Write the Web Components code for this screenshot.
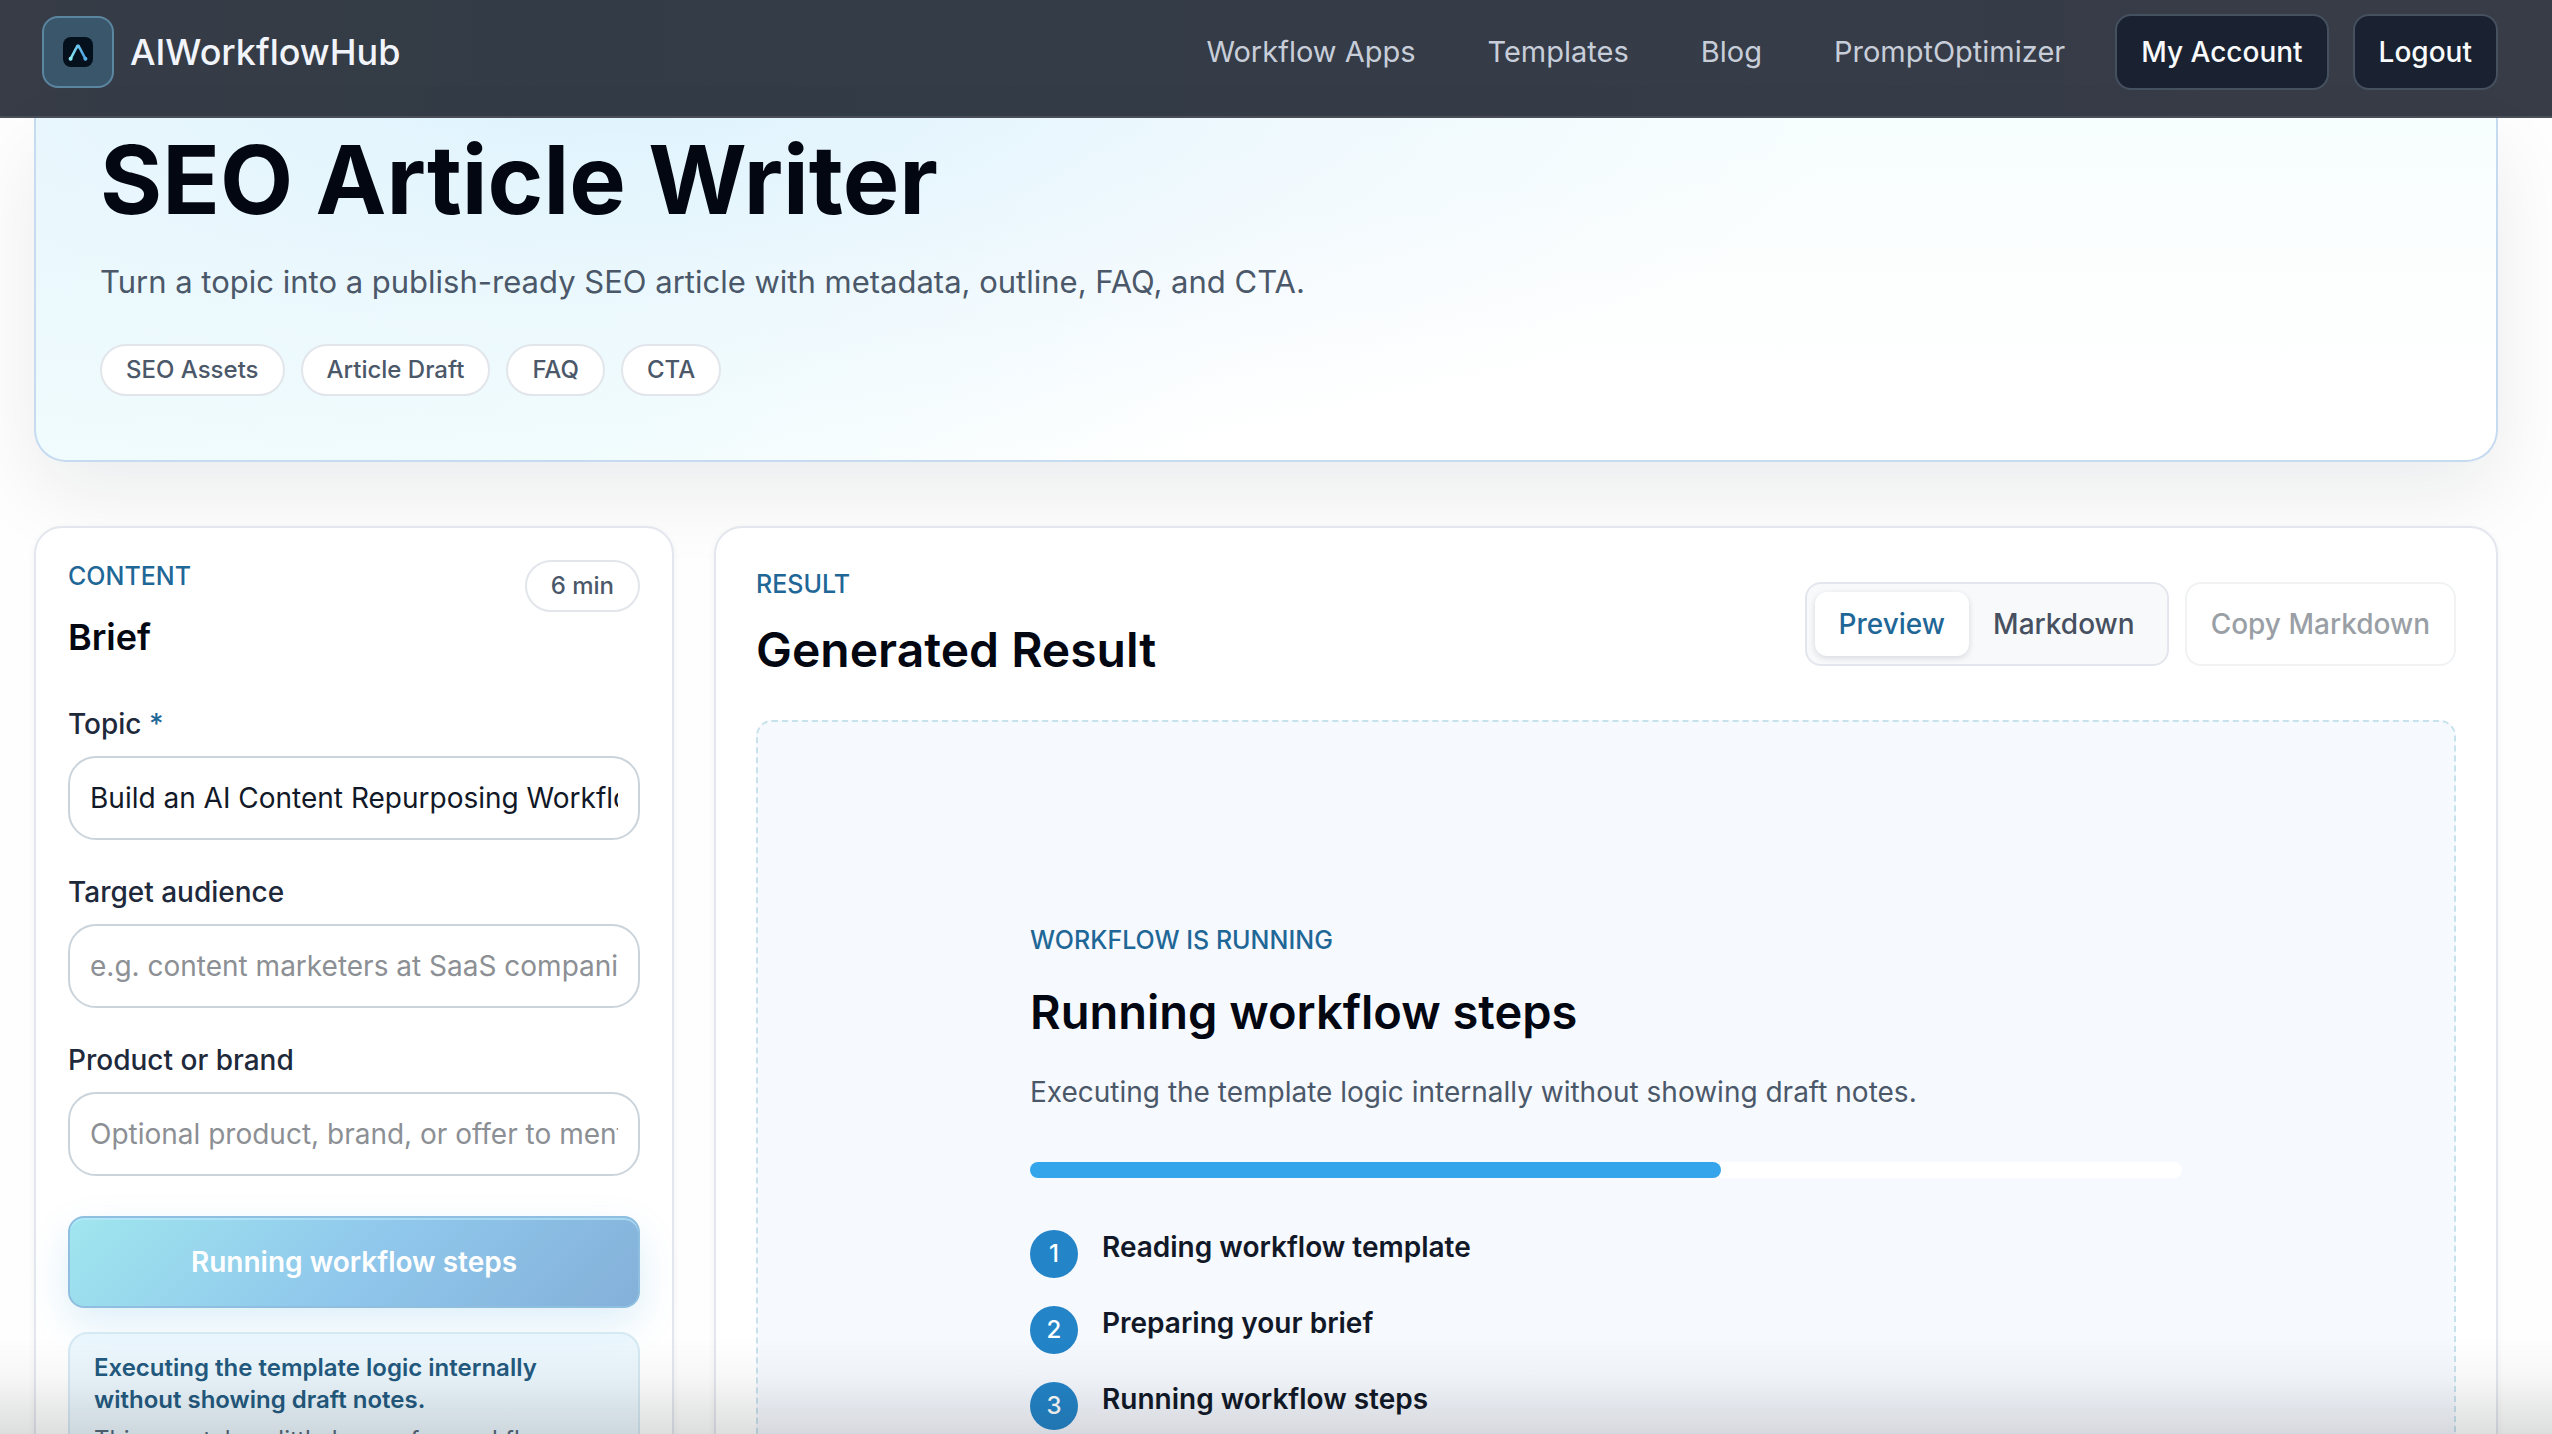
<!DOCTYPE html>
<html lang="en">
<head>
<meta charset="utf-8">
<title>SEO Article Writer – AIWorkflowHub</title>
<style>
  html, body { height: 100%; margin: 0; overflow: hidden; }
  body {
    --ink: #030712; --text: #1e293b; --muted: #4b5869; --accent: #1f6797; --line: #e3e7ed;
    background: #fefefe; color: var(--ink);
    font: 400 28px/40px Inter, "Open Sans", sans-serif;
    -webkit-font-smoothing: antialiased;
  }
</style>
</head>
<body>
<awh-app></awh-app>
<script>
const define = (name, css, html) => customElements.define(name, class extends HTMLElement {
  constructor() {
    super();
    const t = document.createElement('template');
    t.innerHTML = `<style>*{box-sizing:border-box}${css}</style>${typeof html === 'function' ? html(this) : html}`;
    this.attachShadow({ mode: 'open' }).append(t.content.cloneNode(true));
  }
});

define('awh-logo', `
  :host { display: block; }
  a { display: flex; align-items: center; gap: 16px; color: #f1f5fb; text-decoration: none; font-size: 36px; font-weight: 500; }
  .tile { display: grid; place-items: center; width: 72px; height: 72px; border: 2px solid #5b86a0; border-radius: 16px; background: #3a566b; }
  svg { display: block; width: 30px; height: 30px; }
`, `<a href="#"><span class="tile"><svg viewBox="0 0 30 30" aria-hidden="true">
  <defs><linearGradient id="g" x1="0" y1="0" x2="1" y2="0"><stop offset="0" stop-color="#86e6f2"/><stop offset="1" stop-color="#4a9fe0"/></linearGradient></defs>
  <rect width="30" height="30" rx="8" fill="#05101d"/>
  <path d="M7.500 22 L13.500 10.500 Q15 7 16.500 10.500 L22.500 22" fill="none" stroke="url(#g)" stroke-width="2.600" stroke-linecap="round" stroke-linejoin="round"/>
  <circle cx="7.600" cy="21.700" r="2" fill="#8aeaf0"/><circle cx="15" cy="9.500" r="2" fill="#67c4ee"/><circle cx="22.400" cy="21.700" r="2" fill="#58b0ea"/>
</svg></span><span>AIWorkflowHub</span></a>`);

define('awh-header', `
  :host { display: block; background: linear-gradient(90deg, #373c47, #333c46 20%, #353c48 60%, #383c47); border-bottom: 2px solid #4a4f59; }
  header { display: flex; justify-content: space-between; align-items: center; padding: 14px 54px 26px 42px; }
  nav { display: flex; align-items: center; gap: 72px; }
  nav a { color: #c8ced9; text-decoration: none; font-size: 29px; }
  .actions { display: flex; gap: 24px; margin-left: -22px; }
  button { font: inherit; font-weight: 500; color: #f8fafc; height: 76px; padding: 0 24px; border: 2px solid #465160; border-radius: 16px; background: #1a2232; }
`, `<header><awh-logo></awh-logo>
  <nav><a href="#">Workflow Apps</a><a href="#">Templates</a><a href="#">Blog</a><a href="#">PromptOptimizer</a>
    <div class="actions"><button type="button">My Account</button><button type="button">Logout</button></div></nav></header>`);

define('awh-chip', `
  :host { display: inline-flex; align-items: center; height: 52px; padding: 0 24px; border: 2px solid #e2e6eb; border-radius: 26px; background: #fff; color: var(--muted); font-size: 24px; font-weight: 500; white-space: nowrap; }
`, `<slot></slot>`);

define('awh-eyebrow', `
  :host { display: block; color: var(--accent); font-size: 25px; line-height: 32px; font-weight: 500; text-transform: uppercase; }
`, `<slot></slot>`);

define('awh-hero', `
  :host { display: block; padding: 16px 64px 64px; border: 2px solid #c6dbf0; border-top: 0; border-radius: 0 0 32px 32px;
    background:
      radial-gradient(ellipse 50% 120% at 24% -10%, rgba(214,238,253,.7), rgba(224,240,253,.35) 55%, transparent),
      linear-gradient(112deg, #effbfd, #f2fdfd 25%, transparent 50%),
      linear-gradient(180deg, #f7fefe, #fdfefe 50%, #fff 80%), #fff;
    box-shadow: 0 32px 80px rgba(15,23,42,.08); }
  h1 { margin: 0; font-size: 95px; line-height: 92px; font-weight: 700; }
  p { margin: 28px 0 34px; color: var(--muted); font-size: 31px; line-height: 56px; }
  .chips { display: flex; gap: 16px; }
`, `<h1>SEO Article Writer</h1>
  <p>Turn a topic into a publish-ready SEO article with metadata, outline, FAQ, and CTA.</p>
  <div class="chips"><awh-chip>SEO Assets</awh-chip><awh-chip>Article Draft</awh-chip><awh-chip>FAQ</awh-chip><awh-chip>CTA</awh-chip></div>`);

define('awh-card', `
  :host { display: block; border: 2px solid var(--line); border-radius: 28px; background: #fff; box-shadow: 0 2px 6px rgba(15,23,42,.06); }
`, `<slot></slot>`);

define('awh-field', `
  :host { display: flex; flex-direction: column; gap: 12px; }
  label { color: var(--text); font-weight: 500; }
  i { font-style: normal; color: var(--accent); }
  input { font: inherit; color: #111827; width: 100%; height: 84px; padding: 0 20px; border: 2px solid #ccd4db; border-radius: 28px; background: #fff; outline: 0; }
  input::placeholder { color: #8c8f94; opacity: 1; }
`, el => `<label for="f">${el.getAttribute('label')}${el.hasAttribute('required') ? ' <i>*</i>' : ''}</label>
  <input id="f" type="text" value="${el.getAttribute('value') || ''}" placeholder="${el.getAttribute('placeholder') || ''}">`);

define('awh-brief', `
  :host { display: block; }
  awh-card { height: 100%; padding: 32px; }
  .head { display: flex; justify-content: space-between; align-items: flex-start; }
  h2 { margin: 24px 0 46px; font-size: 36px; line-height: 42px; font-weight: 600; }
  form { display: flex; flex-direction: column; gap: 32px; }
  button { margin-top: 8px; height: 92px; border: 2px solid #8ebfe0; border-radius: 16px; color: #fff; font: inherit; font-weight: 600;
    background: linear-gradient(135deg, #a0e6ee, #90c8ec 50%, #84b0d8) border-box;
    box-shadow: 0 16px 40px rgba(14,140,210,.14), inset 0 2px 0 rgba(190,235,255,.6); }
  .note { margin-top: -8px; padding: 18px 24px; border: 2px solid #d5e9f3; border-radius: 20px; background: rgba(226,242,252,.65); font-size: 24px; line-height: 32px; }
  strong { display: block; color: #235a7f; font-weight: 600; }
  p { margin: 8px 0 0; color: #56687a; }
`, `<awh-card><div class="head"><div><awh-eyebrow>Content</awh-eyebrow><h2>Brief</h2></div><awh-chip>6 min</awh-chip></div>
  <form>
    <awh-field label="Topic" required value="Build an AI Content Repurposing Workflow"></awh-field>
    <awh-field label="Target audience" placeholder="e.g. content marketers at SaaS companies"></awh-field>
    <awh-field label="Product or brand" placeholder="Optional product, brand, or offer to mention"></awh-field>
    <button type="button" disabled>Running workflow steps</button>
    <div class="note"><strong>Executing the template logic internally without showing draft notes.</strong>
      <p>This may take a little longer for workflows.</p></div>
  </form></awh-card>`);

define('awh-step', `
  :host { display: flex; gap: 24px; min-height: 48px; }
  .n { flex: none; display: grid; place-items: center; width: 48px; height: 48px; border-radius: 50%; background: #2384c8; color: #fff; font-size: 24px; font-weight: 500; }
  .t { color: #111827; font-weight: 600; line-height: 34px; }
  ::slotted(small) { display: block; margin-top: 12px; color: var(--muted); font-size: 24px; line-height: 36px; font-weight: 400; }
`, el => `<span class="n">${el.getAttribute('n')}</span><div class="t">${el.getAttribute('label')}<slot></slot></div>`);

define('awh-result', `
  :host { display: block; min-width: 0; }
  awh-card { height: 100%; padding: 40px; }
  .head { display: flex; justify-content: space-between; align-items: center; margin-bottom: 40px; }
  h2 { margin: 20px 0 0; font-size: 48px; line-height: 60px; font-weight: 600; }
  .tools { display: flex; gap: 16px; }
  .tabs { display: flex; padding: 8px; border: 2px solid var(--line); border-radius: 16px; background: #f8f9fb; }
  button { font: inherit; font-weight: 500; color: #475060; border: 0; background: none; padding: 0 24px; height: 64px; border-radius: 12px; }
  .on { background: #fff; color: var(--accent); box-shadow: 0 2px 6px rgba(15,23,42,.14); }
  .copy { height: 84px; border: 2px solid #f0f2f4; border-radius: 16px; color: #9a9fa6; background: #fff; }
  .stage { display: flex; justify-content: center; padding: 202px 40px; border: 2px dashed #c8e2ec; border-radius: 16px; background: #f6f9fe; }
  .run { width: 100%; max-width: 1152px; }
  h3 { margin: 26px 0 28px; font-size: 47px; line-height: 60px; font-weight: 600; }
  p { margin: 0 0 48px; color: var(--muted); line-height: 44px; }
  .bar { height: 16px; margin-bottom: 52px; border-radius: 8px; background: #fff; }
  .bar div { width: 60%; height: 100%; border-radius: 8px; background: #34a5ea; }
  .steps { display: flex; flex-direction: column; gap: 28px; }
`, `<awh-card><div class="head"><div><awh-eyebrow>Result</awh-eyebrow><h2>Generated Result</h2></div>
    <div class="tools"><div class="tabs"><button type="button" class="on">Preview</button><button type="button">Markdown</button></div>
      <button type="button" class="copy" disabled>Copy Markdown</button></div></div>
  <div class="stage"><div class="run"><awh-eyebrow>Workflow is running</awh-eyebrow><h3>Running workflow steps</h3>
    <p>Executing the template logic internally without showing draft notes.</p>
    <div class="bar" role="progressbar" aria-valuenow="60" aria-valuemin="0" aria-valuemax="100" aria-label="Workflow progress"><div></div></div>
    <div class="steps"><awh-step n="1" label="Reading workflow template"></awh-step><awh-step n="2" label="Preparing your brief"></awh-step>
      <awh-step n="3" label="Running workflow steps"></awh-step></div>
  </div></div></awh-card>`);

define('awh-app', `
  :host { display: block; }
  main { padding: 0 54px 64px 34px; }
  .cols { display: grid; grid-template-columns: 640px 1fr; gap: 40px; margin-top: 64px; }
  .shade { position: fixed; left: 0; right: 0; bottom: 0; height: 96px; pointer-events: none;
    background: linear-gradient(180deg, transparent, rgba(20,24,30,.03) 40%, rgba(20,24,30,.14)); }
`, `<awh-header></awh-header><main><awh-hero></awh-hero><div class="cols"><awh-brief></awh-brief><awh-result></awh-result></div></main><div class="shade"></div>`);
</script>
</body>
</html>
